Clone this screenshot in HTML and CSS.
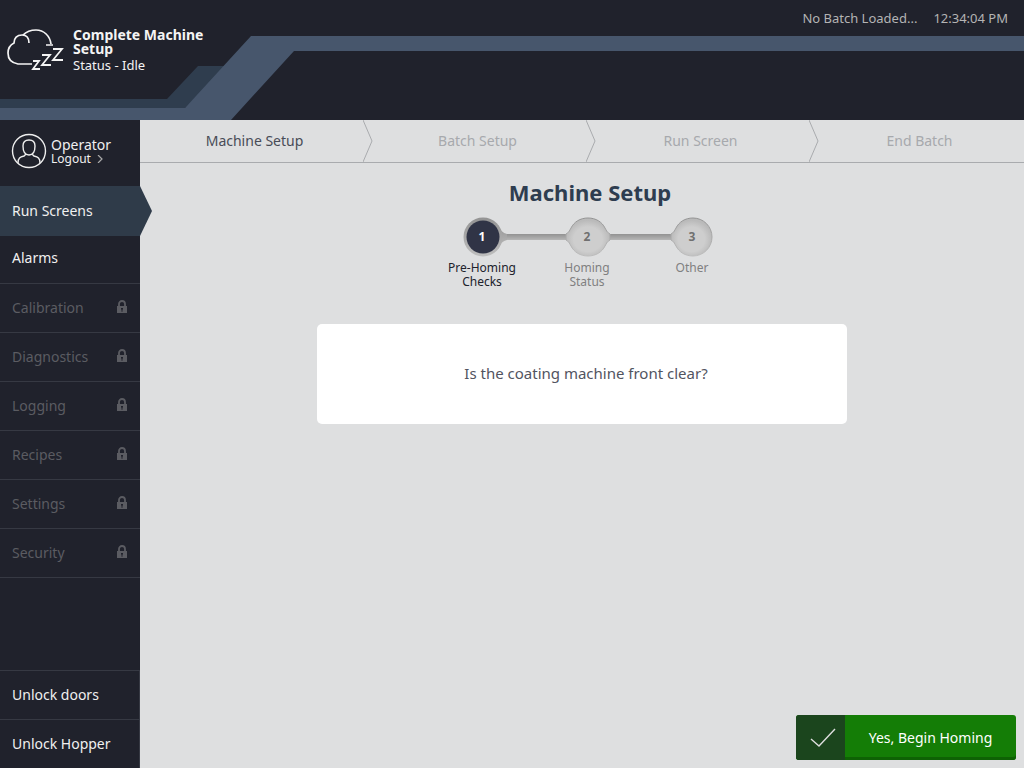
FILE: index.html
```html
<!DOCTYPE html>
<html lang="en">
<head>
<meta charset="utf-8">
<meta name="viewport" content="width=device-width, initial-scale=1">
<title>Machine Setup</title>
<link rel="stylesheet" href="styles.css">
</head>
<body>
<svg class="defs" aria-hidden="true">
  <symbol id="lock" viewBox="0 0 10 14">
    <path d="M2 7V4a3 3 0 0 1 6 0v3" fill="none" stroke="currentColor" stroke-width="1.8"/>
    <path fill="currentColor" fill-rule="evenodd" d="M0 6h10v7H0zM4 8v1.300l.5.400v2h1v-2l.5-.4V8z"/>
  </symbol>
</svg>
<div class="app">
  <header class="header">
    <svg class="ribbon" aria-hidden="true">
      <path fill="#2f3d4e" d="M0 99H167L198 66H230L185 108H0z"/>
      <path fill="#47566c" d="M0 108H185L251 36H4000V51H294L231 120H0z"/>
    </svg>
    <div class="machine">
      <svg class="cloud" viewBox="0 0 58 42" aria-hidden="true" fill="none" stroke="#f4f4f4" stroke-width="1.700">
        <path d="M25 35H11C5 34 1 30 1 24C1 19 3 16 7 14C7 9 10 6 15 6C19 6 22 8 22 14M16 6C20 2 25 1 29 1C37 1 43 7 44 15M39 16H46"/>
        <path d="M26 32h6l-6 8h7M35 26h8l-8 10h9M46 20h9L46 31h10" stroke-width="1.800"/>
      </svg>
      <div>
        <h2 class="machine-name">Complete Machine Setup</h2>
        <p class="machine-status">Status - Idle</p>
      </div>
    </div>
    <div class="info"><span>No Batch Loaded...</span><time>12:34:04 PM</time></div>
  </header>
  <aside class="sidebar">
    <div class="user">
      <svg class="avatar" viewBox="0 0 36 36" aria-hidden="true" fill="none" stroke="#eee" stroke-width="1.400">
        <circle cx="18" cy="18" r="16.500"/>
        <path d="M18 7C14 7 12 9 12 13C12 18 14 22 18 22S24 18 24 13C24 9 22 7 18 7zM7 30C7 25 9 24 13 23L15 21M29 30C29 25 27 24 23 23L21 21"/>
      </svg>
      <div class="user-text">
        <p class="user-name">Operator</p>
        <a class="logout" href="#">Logout <svg viewBox="0 0 6 8" aria-hidden="true"><path d="M1 0L5 4L1 8" fill="none" stroke="#aaa" stroke-width="1.200"/></svg></a>
      </div>
    </div>
    <nav class="menu">
      <a class="item current" href="#">Run Screens</a>
      <a class="item" href="#">Alarms</a>
      <button class="item locked" disabled>Calibration <svg><use href="#lock"/></svg></button>
      <button class="item locked" disabled>Diagnostics <svg><use href="#lock"/></svg></button>
      <button class="item locked" disabled>Logging <svg><use href="#lock"/></svg></button>
      <button class="item locked" disabled>Recipes <svg><use href="#lock"/></svg></button>
      <button class="item locked" disabled>Settings <svg><use href="#lock"/></svg></button>
      <button class="item locked" disabled>Security <svg><use href="#lock"/></svg></button>
    </nav>
    <div class="unlock">
      <button class="item">Unlock doors</button>
      <button class="item">Unlock Hopper</button>
    </div>
  </aside>
  <main class="main">
    <nav class="tabs">
      <a class="tab active" href="#">Machine Setup<svg viewBox="0 0 10 42" aria-hidden="true"><path d="M0 0L9 21L0 42"/></svg></a>
      <a class="tab" href="#">Batch Setup<svg viewBox="0 0 10 42" aria-hidden="true"><path d="M0 0L9 21L0 42"/></svg></a>
      <a class="tab" href="#">Run Screen<svg viewBox="0 0 10 42" aria-hidden="true"><path d="M0 0L9 21L0 42"/></svg></a>
      <a class="tab" href="#">End Batch</a>
    </nav>
    <section class="content">
      <h1 class="title">Machine Setup</h1>
      <div class="stepper">
        <svg class="track" viewBox="0 0 252 40" aria-hidden="true">
          <defs>
            <linearGradient id="bar" x2="0" y2="1"><stop stop-color="#929292"/><stop offset="1" stop-color="#b6b6b6"/></linearGradient>
            <linearGradient id="rim" x2="0" y2="1"><stop stop-color="#939393"/><stop offset="1" stop-color="#bebebe"/></linearGradient>
            <radialGradient id="disc" cy=".56"><stop offset=".65" stop-color="#cecece"/><stop offset="1" stop-color="#bababa"/></radialGradient>
          </defs>
          <path fill="url(#bar)" d="M38 17H215V23H38z"/>
          <path fill="url(#rim)" d="M36 8Q39 16 45 17V23Q39 24 36 32z"/>
          <circle cx="21" cy="20" r="19.500" fill="url(#rim)"/>
          <circle cx="21" cy="20" r="16.500" fill="#303446"/>
          <path fill="url(#disc)" stroke="url(#rim)" d="M126 1C118 1 112 5 109 11Q107 16 104 17V23Q107 24 109 29C112 35 118 39 126 39S140 35 143 29Q145 24 148 23V17Q145 16 143 11C140 5 134 1 126 1z"/>
          <path fill="url(#disc)" stroke="url(#rim)" d="M231 1C223 1 217 5 214 11Q212 16 209 17V23Q212 24 214 29C217 35 223 39 231 39A19 19 0 0 0 231 1z"/>
        </svg>
        <ol class="steps">
          <li class="step now"><b>1</b><span>Pre-Homing Checks</span></li>
          <li class="step"><b>2</b><span>Homing Status</span></li>
          <li class="step"><b>3</b><span>Other</span></li>
        </ol>
      </div>
      <p class="card">Is the coating machine front clear?</p>
    </section>
    <footer class="actions">
      <button class="confirm">
        <span class="tick"><svg viewBox="0 0 26 20" aria-hidden="true"><path d="M1 11L9 18L25 1" fill="none" stroke="#ddd" stroke-width="1.400"/></svg></span>
        <span class="confirm-text">Yes, Begin Homing</span>
      </button>
    </footer>
  </main>
</div>
</body>
</html>
```
FILE: styles.css
```css
* { box-sizing: border-box; }
body, h1, h2, p, ol { margin: 0; padding: 0; }
body { font-family: "Noto Sans", "Open Sans", sans-serif; font-size: 14px; background: #dedfe0; }
a { color: inherit; text-decoration: none; }
button { font: inherit; border: 0; cursor: pointer; }
.defs { position: absolute; width: 0; height: 0; }

.app { display: grid; grid-template: 120px 1fr / 140px 1fr; min-height: 100vh; }

.header { grid-column: 1 / -1; position: relative; display: flex; justify-content: space-between; align-items: flex-start; background: #20222c; color: #f4f4f4; }
.ribbon { position: absolute; inset: 0; width: 100%; height: 100%; }
.machine { position: relative; display: flex; gap: 8px; padding: 28px 0 0 7px; }
.cloud { width: 58px; height: 42px; margin-top: 1px; }
.machine-name { width: 144px; font-size: 14px; line-height: 14px; }
.machine-status { font-size: 13px; line-height: 18px; }
.info { position: relative; display: flex; gap: 16px; padding: 8px 16px 0 0; font-size: 13px; line-height: 20px; color: #b4b4b4; }

.sidebar { display: flex; flex-direction: column; background: #20222c; color: #f0f0f0; }
.user { display: flex; align-items: center; gap: 4px; height: 66px; padding: 0 0 4px 11px; }
.avatar { width: 36px; height: 36px; }
.user-name { font-size: 14px; line-height: 15px; }
.logout { display: flex; align-items: center; gap: 6px; font-size: 12px; line-height: 14px; }
.logout svg { width: 6px; height: 8px; }
.item { display: flex; align-items: center; justify-content: space-between; width: 100%; height: 49px; padding: 0 13px 2px 12px; border-bottom: 1px solid #363943; background: none; color: inherit; text-align: left; }
.item svg { width: 10px; height: 14px; }
.menu .item:nth-child(2) { height: 48px; padding-bottom: 4px; }
.menu .current { position: relative; height: 50px; border: 0; background: #2f3b49; }
.current::after { content: ""; position: absolute; left: 100%; top: 0; width: 12px; height: 100%; background: inherit; clip-path: polygon(0 0, 100% 50%, 0 100%); }
.menu .locked { color: #5b5c62; }
.unlock { margin-top: auto; border-right: 1px solid #363943; }
.unlock .item { border-width: 1px 0 0; border-top: 1px solid #363943; }

.main { display: flex; flex-direction: column; }
.tabs { display: grid; grid-template-columns: repeat(3, 223fr) 215fr; height: 43px; border-bottom: 1px solid #a9abae; }
.tab { position: relative; display: flex; align-items: center; justify-content: center; padding: 0 0 2px 6px; color: #a7a9ad; }
.tab.active { color: #484c57; }
.tab svg { position: absolute; left: 100%; top: 0; width: 10px; height: 42px; fill: none; stroke: #a9abae; }
.content { display: flex; flex-direction: column; align-items: center; flex: 1; padding: 15px 32px; }
.title { padding-left: 16px; font-size: 22px; line-height: 28px; color: #2e3d50; }
.stepper { position: relative; margin: 11px 0 0 10px; }
.steps { position: relative; display: grid; grid-template-columns: repeat(3, 105px); list-style: none; }
.track { position: absolute; left: 32px; top: 0; width: 252px; height: 40px; }
.step { display: flex; flex-direction: column; align-items: center; color: #808080; font-size: 12px; line-height: 14px; text-align: center; }
.step b { height: 44px; line-height: 39px; color: #707070; }
.step span { width: 72px; }
.step.now { color: #20222c; }
.step.now b { color: #fff; }
.card { display: flex; align-items: center; justify-content: center; width: 100%; max-width: 530px; min-height: 100px; margin-top: 35px; padding: 14px 12px 16px 20px; border-radius: 5px; background: #fff; color: #52545f; font-size: 15px; }
.actions { display: flex; justify-content: flex-end; padding: 8px; }
.confirm { display: flex; width: 220px; height: 45px; padding: 0; border-radius: 3px; overflow: hidden; background: #147d06; color: #fff; box-shadow: inset 0 -3px #0e6204; }
.tick { display: flex; align-items: center; justify-content: center; width: 49px; height: 100%; padding-left: 5px; background: #1b451d; }
.tick svg { width: 26px; height: 20px; }
.confirm-text { flex: 1; align-self: center; text-align: center; }
```
